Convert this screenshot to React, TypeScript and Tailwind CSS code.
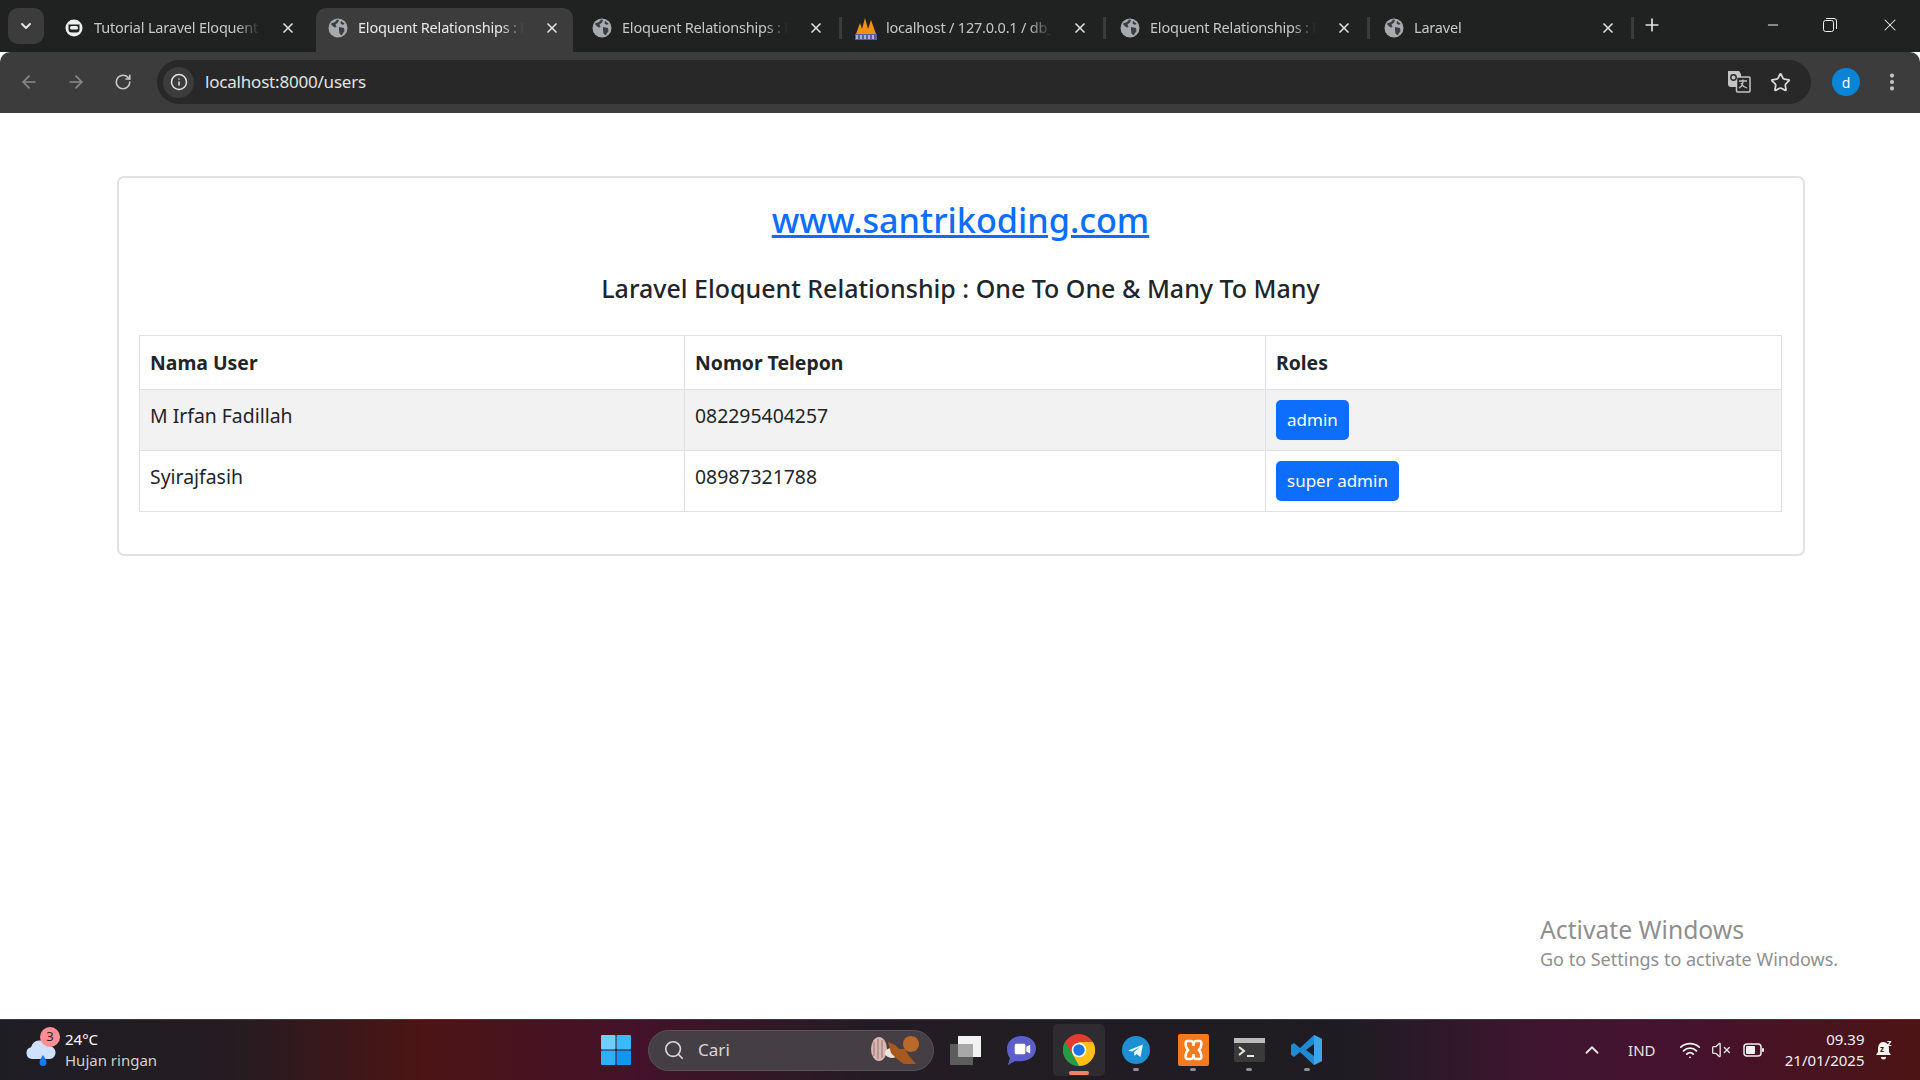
import { ArrowLeft, ArrowRight, ChevronDown, ChevronUp, Info, Minus, MoreVertical, Plus, RotateCw, Search, Star, VolumeX, Wifi, X } from "lucide-react";

const Globe = () => (
  <svg width="20" height="20" viewBox="0 0 20 20" className="shrink-0">
    <circle cx="10" cy="10" r="9.5" fill="#a6abb0" />
    <path d="M3 5.5 7 4l2-2.5 2 .5-1 2.5-2.5 2 1 2.5-2 .5L3.5 7zM11 9l5 1 .5 3-3 4.500-2-2-.5-3.500zM13 3l3.500 2.500L15 7l-2.500-1.500z" fill="#3c3f42" />
  </svg>
);

const Pma = () => (
  <svg width="22" height="24" viewBox="0 0 22 24" className="shrink-0">
    <path d="M1 18 5 7l2 6 3-11 3 11 3-9 5 14z" fill="#f29111" />
    <rect x="0" y="18" width="22" height="6" fill="#5a5f96" />
    <path d="M2 19v4M6 19v4M10 19v4M14 19v4M18 19v4" stroke="#c7cbe6" strokeWidth="1.5" />
  </svg>
);

const Speakeasy = () => (
  <svg width="18" height="18" viewBox="0 0 18 18" className="shrink-0">
    <circle cx="9" cy="9" r="8.5" fill="#eeeeee" />
    <path d="M3.5 5.500h11v5a3 3 0 0 1-3 3h-5a3 3 0 0 1-3-3z" fill="#202222" />
    <rect x="5" y="7" width="8" height="3.5" rx="1.5" fill="#eeeeee" />
  </svg>
);

const tabs = [
  { title: "Tutorial Laravel Eloquent Relationships", icon: <Speakeasy />, sep: false },
  { title: "Eloquent Relationships : Many To Many", icon: <Globe />, active: true, sep: false },
  { title: "Eloquent Relationships : Many To Many", icon: <Globe />, sep: true },
  { title: "localhost / 127.0.0.1 / db_laravel", icon: <Pma />, sep: true },
  { title: "Eloquent Relationships : Many To Many", icon: <Globe />, sep: true },
  { title: "Laravel", icon: <Globe />, sep: true },
];

const rows = [
  { name: "M Irfan Fadillah", phone: "082295404257", role: "admin", striped: true },
  { name: "Syirajfasih", phone: "08987321788", role: "super admin", striped: false },
];

const Dot = () => <span className="h-[3px] w-[6px] rounded-full bg-[#8d8d92]" />;

const TaskIcon = ({ children, running, className }: { children: React.ReactNode; running?: boolean; className?: string }) => (
  <div className={"relative flex h-[52px] w-[52px] shrink-0 items-center justify-center " + (className ?? "")}>
    {children}
    {running && (
      <span className="absolute bottom-[5px] left-1/2 flex -translate-x-1/2">
        <Dot />
      </span>
    )}
  </div>
);

export default function App() {
  return (
    <div className="flex h-screen w-full flex-col overflow-hidden bg-white font-['Noto_Sans',sans-serif]">
      {/* tab strip */}
      <div className="flex h-[52px] shrink-0 items-end bg-[#202222] pl-[8px]">
        <div className="mb-[8px] flex h-[36px] w-[36px] items-center justify-center rounded-[10px] bg-[#3c3c3c] text-[#e3e3e3]">
          <ChevronDown size={16} strokeWidth={3} />
        </div>
        <div className="ml-[8px] flex">
          {tabs.map((t, i) => (
            <div
              key={i}
              className={
                "flex h-[44px] items-center pl-[12px] pb-[5px] text-[14.5px] " +
                (t.active ? "mr-[7px] w-[257px] rounded-t-[10px] bg-[#3c3c3c] text-[#e8e8e8]" : "w-[264px] text-[#c7c7c7]")
              }
            >
              <div className="flex w-[20px] justify-center">{t.icon}</div>
              <div className="ml-[10px] w-[166px] overflow-hidden whitespace-nowrap tracking-[-0.2px] [mask-image:linear-gradient(to_right,black_86%,transparent)]">
                {t.title}
              </div>
              <X size={16} strokeWidth={2.5} className="ml-[20px] text-[#e3e3e3]" />
              {t.sep && <span className="ml-[15px] h-[22px] w-[3px] bg-[#3a3c3c]" />}
            </div>
          ))}
        </div>
        <Plus size={20} strokeWidth={2} className="mb-[17px] ml-[6px] text-[#e3e3e3]" />
        <div className="ml-auto flex h-full items-center pb-[3px] text-[#eeeeee]">
          <Minus size={16} strokeWidth={1.5} className="mr-[42px]" />
          <svg width="14" height="14" viewBox="0 0 14 14" fill="none" stroke="currentColor" className="mr-[43px]">
            <rect x="0.5" y="2.5" width="10" height="11" rx="2" />
            <path d="M3 .5h8a2.500 2.500 0 0 1 2.500 2.500v8" />
          </svg>
          <X size={20} strokeWidth={1.25} className="mr-[20px]" />
        </div>
      </div>

      {/* toolbar */}
      <div className="flex h-[61px] shrink-0 items-start rounded-t-[10px] bg-[#3c3c3c] pt-[8px]">
        <div className="flex h-[44px] items-center pl-[19px] text-[#8a8a8a]">
          <ArrowLeft size={20} strokeWidth={2} />
          <ArrowRight size={20} strokeWidth={2} className="ml-[27px]" />
          <RotateCw size={18} strokeWidth={2.2} className="ml-[28px] text-[#c7c7c7]" />
        </div>
        <div className="ml-[25px] flex h-[44px] w-[1654px] items-center rounded-full bg-[#282828] pl-[6px] pr-[20px]">
          <div className="flex h-[31px] w-[31px] items-center justify-center rounded-full bg-[#3c3c3c] text-[#e3e3e3]">
            <Info size={18} strokeWidth={2} />
          </div>
          <span className="ml-[11px] text-[17px] tracking-[-0.2px] text-[#e3e3e3]">localhost:8000/users</span>
          <svg width="24" height="24" viewBox="0 0 24 24" className="ml-auto">
            <path d="M1 1h11l2 3v13H4a3 3 0 0 1-3-3z" fill="#c4c4c4" />
            <rect x="9.5" y="7" width="13.5" height="15" rx="1" fill="#282828" stroke="#c4c4c4" strokeWidth="1.5" />
            <path d="M12 11h8M16 9.500V11c0 3-2 6-4 7M14 13c1 2 3 4 6 5" stroke="#c4c4c4" strokeWidth="1.3" fill="none" />
            <circle cx="6.5" cy="7.5" r="2.7" fill="none" stroke="#282828" strokeWidth="1.4" />
          </svg>
          <Star size={21} strokeWidth={2} className="ml-[19px] text-[#d8d8d8]" />
        </div>
        <div className="ml-[21px] flex h-[44px] items-center">
          <div className="flex h-[28px] w-[28px] items-center justify-center rounded-full bg-[#0a84d6] text-[14px] text-white">d</div>
          <MoreVertical size={22} strokeWidth={2.5} className="ml-[21px] text-[#c7c7c7]" />
        </div>
      </div>

      {/* page */}
      <main className="relative min-h-0 flex-1 pl-[117px] pr-[115px] pt-[63px] text-[#212529]">
        <div className="rounded-[7px] border-2 border-[#e2e2e2] pl-[20px] pr-[21px] pb-[42px]">
          <h2 className="mt-[20px] text-center text-[34.2px] leading-[44px] font-medium">
            <a className="text-[#0d6efd] underline">www.santrikoding.com</a>
          </h2>
          <h4 className="mt-[28px] text-center text-[25px] leading-[36px] font-medium">
            Laravel Eloquent Relationship : One To One &amp; Many To Many
          </h4>
          <table className="mt-[29px] w-full table-fixed border-collapse text-[19.4px] text-[#212529]">
            <thead>
              <tr className="h-[54px]">
                <th className="w-[545px] border border-[#dee2e6] px-[10px] text-left font-bold">Nama User</th>
                <th className="w-[581px] border border-[#dee2e6] px-[10px] text-left font-bold">Nomor Telepon</th>
                <th className="border border-[#dee2e6] px-[10px] text-left font-bold">Roles</th>
              </tr>
            </thead>
            <tbody>
              {rows.map((r) => (
                <tr key={r.name} className={"h-[61px] " + (r.striped ? "bg-[#f2f2f2]" : "")}>
                  <td className="border border-[#dee2e6] px-[10px] pb-[8px]">{r.name}</td>
                  <td className="border border-[#dee2e6] px-[10px] pb-[8px]">{r.phone}</td>
                  <td className="border border-[#dee2e6] px-[10px]">
                    <button className="h-[40px] rounded-[5px] bg-[#0d6efd] px-[11px] text-[17px] text-white">{r.role}</button>
                  </td>
                </tr>
              ))}
            </tbody>
          </table>
        </div>
        {/* windows watermark sits over the page */}
        <div className="absolute bottom-[47px] left-[1540px] text-[#8f8f8f]">
          <div className="text-[24.7px] leading-[32px]">Activate Windows</div>
          <div className="text-[18px] leading-[26px]">Go to Settings to activate Windows.</div>
        </div>
      </main>

      {/* taskbar */}
      <div className="flex h-[61px] shrink-0 items-center border-t border-[#3a3a3a] bg-[linear-gradient(90deg,#1f1d24_0%,#241c22_12%,#4c1414_22%,#44122a_33%,#241c24_45%,#1e1c22_70%,#3f1530_80%,#45122f_87%,#4c1414_100%)] text-white">
        <div className="relative ml-[24px] flex h-[40px] w-[41px] items-end">
          <svg width="34" height="32" viewBox="0 0 34 32">
            <path d="M8 21a6 6 0 0 1-1-11.800A9 9 0 0 1 24 8a6.500 6.500 0 0 1 2 13z" fill="#cfe0fb" />
            <path d="M19 17c2 3 3.500 5 3.500 7.500a3.500 3.500 0 0 1-7 0c0-2.500 1.500-4.500 3.500-7.500z" fill="#1e78e6" />
          </svg>
          <span className="absolute left-[16px] top-[-3px] flex h-[20px] w-[20px] items-center justify-center rounded-full bg-[#ff8f97] text-[13px] text-[#3a1a1a]">3</span>
        </div>
        <div className="flex flex-col">
          <span className="text-[15px] leading-[21px]">24°C</span>
          <span className="text-[15px] leading-[21px] text-[#d0d0d0]">Hujan ringan</span>
        </div>

        <svg width="30" height="30" viewBox="0 0 30 30" className="ml-[444px]">
          <rect x="0" y="0" width="14.5" height="14.5" rx="1" fill="#6fd0ff" />
          <rect x="15.5" y="0" width="14.5" height="14.5" rx="1" fill="#3cb8fb" />
          <rect x="0" y="15.5" width="14.5" height="14.5" rx="1" fill="#2db2f8" />
          <rect x="15.5" y="15.5" width="14.5" height="14.5" rx="1" fill="#1296f0" />
        </svg>

        <div className="ml-[17px] flex h-[41px] w-[286px] items-center rounded-full border border-[#5a5258] bg-[#453f45] pl-[14px] pr-[9px] text-[#d8d8d8]">
          <Search size={22} strokeWidth={1.8} />
          <span className="ml-[13px] text-[17px]">Cari</span>
          <svg width="54" height="30" viewBox="0 0 54 30" className="ml-auto">
            <ellipse cx="9" cy="14" rx="8" ry="12" fill="#d8b8b0" />
            <path d="M4 7v14M8 4v20M12 5v18" stroke="#8f7272" />
            <ellipse cx="22" cy="18" rx="7" ry="5" fill="#f0e6df" />
            <path d="M18 7l7 3 4 4h6l4 7 7 8H34l-7-5-6-6z" fill="#a8591e" />
            <circle cx="41" cy="9" r="8" fill="#b96a2a" />
          </svg>
        </div>

        <TaskIcon className="ml-[5px]">
          <svg width="31" height="29" viewBox="0 0 31 29">
            <rect x="8" y="0" width="23" height="21" fill="#f2f2f2" />
            <rect x="0" y="8" width="23" height="21" fill="#5d5d5d" />
            <rect x="8" y="8" width="15" height="13" fill="#a8a8a8" />
          </svg>
        </TaskIcon>
        <TaskIcon className="ml-[4px]">
          <svg width="29" height="29" viewBox="0 0 30 30">
            <path d="M15 0c9 0 15 6 15 13s-6 13-15 13H8l-7 4 2-7C1 20 0 17 0 13 0 6 6 0 15 0z" fill="#5b5fc7" />
            <rect x="8" y="8" width="11" height="11" rx="1.5" fill="#fff" />
            <path d="M20 11l4-2v9l-4-2z" fill="#fff" />
          </svg>
        </TaskIcon>
        <div className="relative ml-[6px] flex h-[52px] w-[52px] items-center justify-center rounded-[5px] bg-[#2e2b31]">
          <svg width="32" height="32" viewBox="0 0 48 48">
            <circle cx="24" cy="24" r="24" fill="#e33b2e" />
            <path d="M24 48a24 24 0 0 0 20.800-36H24l-10 18z" fill="#fbc116" />
            <path d="M3.200 12 14 30.500 24 48A24 24 0 0 1 3.200 12z" fill="#229c46" />
            <circle cx="24" cy="24" r="11" fill="#fff" />
            <circle cx="24" cy="24" r="8.5" fill="#1a73e8" />
          </svg>
          <span className="absolute bottom-[1px] left-1/2 h-[4px] w-[20px] -translate-x-1/2 rounded-full bg-[#f5816b]" />
        </div>
        <TaskIcon running className="ml-[5px]">
          <svg width="28" height="28" viewBox="0 0 28 28">
            <circle cx="14" cy="14" r="14" fill="#1d8fd3" />
            <path d="M6 14.500 21 8.500l-2.500 12.500-4-3-2 2-.5-4 6-5-8 4.500z" fill="#eaf6fd" />
          </svg>
        </TaskIcon>
        <TaskIcon running className="ml-[5px]">
          <svg width="31" height="32" viewBox="0 0 31 32">
            <rect width="31" height="32" rx="2" fill="#f37a1f" />
            <path d="M9 7h4c2 0 2.500 3 2.500 5 0-2 .5-5 2.500-5h4c2 0 2 6-1 9 3 3 3 9 1 9h-4c-2 0-2.500-3-2.500-5 0 2-.5 5-2.500 5H9c-2 0-2-6 1-9-3-3-3-9-1-9z" fill="none" stroke="#fff" strokeWidth="2.5" />
          </svg>
        </TaskIcon>
        <TaskIcon running className="ml-[4px]">
          <svg width="31" height="24" viewBox="0 0 31 24">
            <rect width="31" height="24" rx="2" fill="#3a3a3a" />
            <rect width="31" height="5" fill="#bcbcbc" />
            <path d="M5 9l5 4-5 4" stroke="#e8e8e8" strokeWidth="2" fill="none" />
            <path d="M13 18h7" stroke="#e8e8e8" strokeWidth="2" />
          </svg>
        </TaskIcon>
        <TaskIcon running className="ml-[6px]">
          <svg width="32" height="32" viewBox="0 0 32 32">
            <path d="M23 1 31 5v22l-8 4L9 18l-6 5-3-2v-10l3-2 6 5z" fill="#1f8ad2" />
            <path d="M23 1 31 5v22l-8 4z" fill="#3ca5ec" />
            <path d="M23 10v12l-8-6z" fill="#1e1c22" />
          </svg>
        </TaskIcon>

        <ChevronUp size={22} strokeWidth={2} className="ml-[248px] text-[#e5e5e5]" />
        <span className="ml-[25px] text-[15px] text-[#e5e5e5]">IND</span>
        <Wifi size={22} strokeWidth={2} className="ml-[23px] text-[#f0f0f0]" />
        <VolumeX size={20} strokeWidth={1.6} className="ml-[10px] text-[#e5e5e5]" />
        <svg width="22" height="14" viewBox="0 0 22 14" fill="none" className="ml-[12px]">
          <rect x="1" y="1" width="17" height="12" rx="3" stroke="#f0f0f0" strokeWidth="1.5" />
          <rect x="3" y="3" width="9" height="8" rx="1" fill="#f0f0f0" />
          <rect x="19" y="5" width="2" height="4" rx="1" fill="#f0f0f0" />
        </svg>
        <div className="ml-[18px] flex w-[82px] flex-col items-end text-[15px] leading-[21px] text-[#f0f0f0]">
          <span>09.39</span>
          <span className="whitespace-nowrap">21/01/2025</span>
        </div>
        <svg width="20" height="22" viewBox="0 0 20 22" className="ml-[10px]">
          <path d="M8 3c4 0 6 3 6 7v3l2 3H1l2-3v-3c0-4 2-7 5-7z" fill="#f4f4f4" />
          <path d="M6 18h5a2.500 2.500 0 0 1-5 0z" fill="#f4f4f4" />
          <text x="5" y="13" fontSize="8" fontWeight="700" fill="#3a1420">z</text>
          <text x="12" y="7" fontSize="9" fontWeight="700" fill="#f4f4f4">z</text>
        </svg>
      </div>
    </div>
  );
}
